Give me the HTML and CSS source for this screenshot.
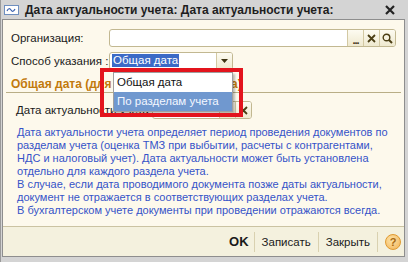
FILE: index.html
```html
<!DOCTYPE html>
<html lang="ru">
<head>
    <meta charset="UTF-8">
    <title>Дата актуальности учета</title>
    <link rel="stylesheet" href="styles.css">
</head>
<body>
<div class="window">
    <div class="titlebar">
        <svg class="app-icon" width="15" height="10" viewBox="0 0 15 10">
            <rect x="0.5" y="0.5" width="14" height="9" fill="#fff" stroke="#6f8fbf"/>
            <path d="M3 6 Q5 2 7 5 T11 4" fill="none" stroke="#3a62b0" stroke-width="1.2"/>
        </svg>
        <span class="title">Дата актуальности учета: Дата актуальности учета:</span>
        <svg class="close" width="10" height="10" viewBox="0 0 10 10">
            <path d="M1 1 L9 9 M9 1 L1 9" stroke="#222" stroke-width="2.2"/>
        </svg>
    </div>
    <div class="content">
        <div class="form">
            <div class="row">
                <label class="label">Организация:</label>
                <div class="field field-org">
                    <span class="field-input"></span>
                    <span class="btn btn-dots">...</span>
                    <span class="btn">
                        <svg width="9" height="9" viewBox="0 0 9 9"><path d="M1 1 L8 8 M8 1 L1 8" stroke="#4b3e14" stroke-width="1.8"/></svg>
                    </span>
                    <span class="btn btn-last">
                        <svg width="11" height="11" viewBox="0 0 11 11"><circle cx="4.5" cy="4.5" r="3.3" fill="none" stroke="#4b3e14" stroke-width="1.4"/><path d="M7 7 L10 10" stroke="#4b3e14" stroke-width="2"/></svg>
                    </span>
                </div>
            </div>
            <div class="row">
                <label class="label">Способ указания :</label>
                <div class="select-wrap">
                    <div class="field field-select">
                        <span class="field-input"><span class="selected">Общая дата</span></span>
                        <span class="btn btn-last">
                            <svg width="7" height="4" viewBox="0 0 7 4"><path d="M0 0 H7 L3.5 4 Z" fill="#3d3312"/></svg>
                        </span>
                    </div>
                    <ul class="dropdown">
                        <li>Общая дата</li>
                        <li class="hover">По разделам учета</li>
                    </ul>
                    <div class="marker"></div>
                </div>
            </div>
            <div class="group-title">Общая дата (для всех разделов учета)</div>
            <div class="row row-date">
                <label class="label label-date">Дата актуальности учета:</label>
                <div class="field field-date">
                    <span class="field-input"></span>
                    <span class="btn"></span>
                    <span class="btn btn-last">
                        <svg width="9" height="9" viewBox="0 0 9 9"><path d="M1 1 L8 8 M8 1 L1 8" stroke="#4b3e14" stroke-width="1.8"/></svg>
                    </span>
                </div>
            </div>
            <p class="note">
                Дата актуальности учета определяет период проведения документов по
                разделам учета (оценка ТМЗ при выбытии, расчеты с контрагентами,
                НДС и налоговый учет). Дата актуальности может быть установлена
                отдельно для каждого раздела учета.<br>
                В случае, если дата проводимого документа позже даты актуальности,
                документ не отражается в соответствующих разделах учета.<br>
                В бухгалтерском учете документы при проведении отражаются всегда.
            </p>
        </div>
        <div class="footer">
            <span class="cmd cmd-ok">OK</span>
            <span class="sep"></span>
            <span class="cmd">Записать</span>
            <span class="sep"></span>
            <span class="cmd">Закрыть</span>
            <span class="sep"></span>
            <span class="help">?</span>
        </div>
    </div>
</div>
</body>
</html>
```

FILE: styles.css
```css
body{
    margin: 0;
    font-family: "Liberation Sans", Arial, sans-serif;
}
.window{
    width: 408px;
    height: 262px;
    box-sizing: border-box;
    background: #d4d4d4;
    padding: 0 3px 5px 1px;
    border-left: 1px solid #9a9a9a;
    display: flex;
    flex-direction: column;
}
.titlebar{
    height: 19px;
    display: flex;
    align-items: center;
    padding: 0 10px 0 2px;
}
.app-icon{
    margin-right: 6px;
    margin-top: 1px;
}
.title{
    flex: 1;
    font-size: 12px;
    font-weight: bold;
    color: #1e1e1e;
}
.close{
    margin-top: 1px;
}
.content{
    flex: 1;
    display: flex;
    flex-direction: column;
    background: #fdf9ec;
    border: 1px solid #8e8e8e;
}
.form{
    flex: 1;
    padding: 9px 8px 0 8px;
}
.row{
    display: flex;
    align-items: center;
    height: 18px;
    margin-bottom: 5px;
}
.label{
    width: 98px;
    flex-shrink: 0;
    white-space: nowrap;
    font-size: 11.5px;
    color: #1a1a1a;
}
.field{
    display: flex;
    height: 18px;
    box-sizing: border-box;
    border: 1px solid #c2b891;
    border-radius: 3px;
    background: #fff;
}
.field-input{
    flex: 1;
    display: flex;
    align-items: center;
    padding-left: 2px;
}
.field-org{
    flex: 1;
}
.btn{
    width: 15px;
    display: flex;
    align-items: center;
    justify-content: center;
    border-left: 1px solid #d3c9a3;
    background: linear-gradient(#fdfbf1, #efe9cf);
}
.btn-last{
    border-radius: 0 2px 2px 0;
}
.btn-dots{
    align-items: flex-end;
    font-size: 11px;
    font-weight: bold;
    color: #3d3312;
    line-height: 12px;
    letter-spacing: -1px;
}
.select-wrap{
    position: relative;
}
.field-select{
    width: 124px;
    margin-top: -1px;
}
.selected{
    background: #3b6ac6;
    color: #fff;
    font-size: 11.5px;
    padding: 0 1px;
    line-height: 13px;
}
.dropdown{
    position: absolute;
    left: 4px;
    top: 19px;
    width: 120px;
    height: 40px;
    margin: 0;
    padding: 0;
    list-style: none;
    box-sizing: border-box;
    border: 1px solid #9f9f9f;
    background: #fff;
    box-shadow: 2px 2px 2px rgba(0,0,0,.25);
    font-size: 11.5px;
}
.dropdown li{
    height: 19px;
    line-height: 19px;
    padding-left: 3px;
    color: #111;
}
.dropdown li.hover{
    background: #7098cf;
    color: #f4f7ff;
}
.marker{
    position: absolute;
    left: -9px;
    top: 15px;
    width: 143px;
    height: 49px;
    box-sizing: border-box;
    border: 4px solid #e3141d;
}
.group-title{
    margin: 7px -5px 8px -5px;
    padding: 0 5px 1px;
    border-bottom: 1px solid #b9ae86;
    font-size: 12px;
    font-weight: bold;
    color: #c27a0c;
    line-height: 14px;
}
.row-date{
    padding-left: 5px;
}
.label-date{
    width: 136px;
}
.field-date{
    width: 100px;
}
.note{
    margin: 7px 0 0 6px;
    font-size: 11px;
    line-height: 13px;
    color: #3553c8;
}
.footer{
    height: 30px;
    box-sizing: border-box;
    border-top: 1px solid #cbc3a2;
    background: #f4f1de;
    display: flex;
    align-items: center;
    justify-content: flex-end;
    padding-right: 3px;
}
.cmd{
    font-size: 11.5px;
    color: #1a1a1a;
    padding: 0 7px;
}
.cmd-ok{
    font-size: 13px;
    font-weight: bold;
    padding-right: 5px;
}
.sep{
    width: 1px;
    height: 20px;
    background: #d9d1b0;
}
.help{
    width: 16px;
    height: 16px;
    margin-left: 7px;
    border-radius: 50%;
    box-sizing: border-box;
    border: 1px solid #e09a30;
    background: radial-gradient(circle at 40% 35%, #fde3a8, #f2b254);
    color: #a8680e;
    font-size: 11px;
    font-weight: bold;
    text-align: center;
    line-height: 14px;
}
```
